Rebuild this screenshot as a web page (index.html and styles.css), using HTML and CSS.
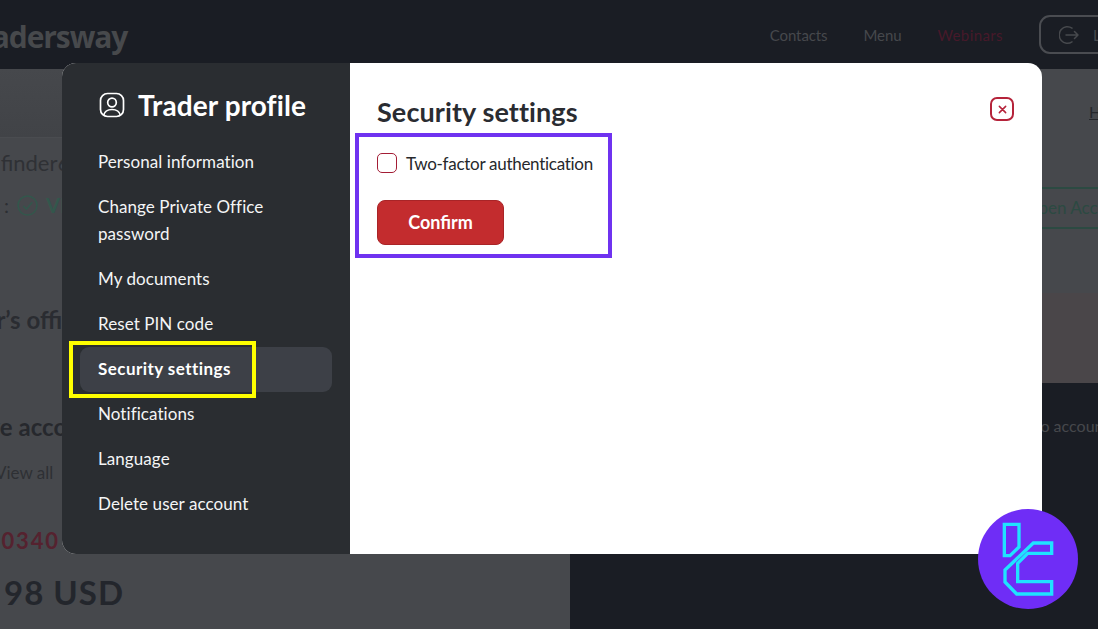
FILE: index.html
```html
<!DOCTYPE html>
<html lang="en">
<head>
<meta charset="utf-8">
<title>Trader profile</title>
<link rel="stylesheet" href="styles.css">
</head>
<body>
<div class="page">
  <header class="topbar">
    <div class="brand">Tradersway</div>
    <nav class="topnav">
      <a class="topnav-link">Contacts</a>
      <a class="topnav-link">Menu</a>
      <a class="topnav-link topnav-red">Webinars</a>
    </nav>
    <div class="logout">
      <svg class="logout-icon" viewBox="0 0 20 20" fill="none" stroke="currentColor" stroke-width="1.5" stroke-linecap="round" stroke-linejoin="round"><path d="M13 3.2A8.2 8.2 0 1 0 13 16.800M7 10H19M15.500 6.500 19 10l-3.500 3.500"/></svg>
      <span>Logout</span>
    </div>
  </header>
  <main class="backdrop">
    <section class="bg-left">
      <div class="bg-banner"></div>
      <div class="bg-name">Pathfinder6</div>
      <div class="bg-status">
        <span>:</span>
        <svg class="bg-check" viewBox="0 0 20 20" fill="none" stroke="currentColor" stroke-width="1.500"><circle cx="10" cy="10" r="9"/><path d="M6 10.500 9 13.500 14.500 7"/></svg>
        <span class="bg-verified">VERIFIED</span>
      </div>
      <h2 class="bg-office">Trader’s office</h2>
      <h2 class="bg-live">Live accounts</h2>
      <div class="bg-view">View all</div>
      <div class="bg-number">10340</div>
      <div class="bg-amount">98 USD</div>
    </section>
    <section class="bg-right">
      <div class="bg-right-top">
        <div class="bg-link">Help</div>
        <div class="bg-open">Open Account</div>
        <div class="bg-tint"></div>
      </div>
      <div class="bg-right-bottom">
        <div class="bg-demo">Go to accounts</div>
      </div>
    </section>
  </main>

  <div class="modal">
    <aside class="sidebar">
      <div class="side-head">
        <svg class="side-icon" viewBox="0 0 26 26" fill="none" stroke="currentColor" stroke-width="1.700"><rect x="1.500" y="1.500" width="23" height="23" rx="7"/><circle cx="13" cy="10.500" r="4.300"/><path d="M4.500 23.500C5.500 19.500 9 17.500 13 17.500S20.500 19.500 21.500 23.500"/></svg>
        <span class="side-title">Trader profile</span>
      </div>
      <ul class="side-list">
        <li class="side-item">Personal information</li>
        <li class="side-item">Change Private Office password</li>
        <li class="side-item">My documents</li>
        <li class="side-item">Reset PIN code</li>
        <li class="side-item side-item-active">Security settings</li>
        <li class="side-item">Notifications</li>
        <li class="side-item">Language</li>
        <li class="side-item">Delete user account</li>
      </ul>
    </aside>
    <section class="content">
      <div class="content-head">
        <h1 class="content-title">Security settings</h1>
        <button class="close" type="button" aria-label="Close">
          <svg viewBox="0 0 10 10" fill="none" stroke="currentColor" stroke-width="1.700" stroke-linecap="round"><path d="M1.500 1.500 8.500 8.500M8.500 1.500 1.500 8.500"/></svg>
        </button>
      </div>
      <label class="check-row">
        <span class="check-box"></span>
        <span class="check-label">Two-factor authentication</span>
      </label>
      <button class="confirm" type="button">Confirm</button>
    </section>
  </div>

  <div class="mark mark-yellow"></div>
  <div class="mark mark-purple"></div>

  <svg class="badge" viewBox="54 327 300 300" fill="none">
    <circle cx="204" cy="477" r="150" fill="#6f2df6"/>
    <g stroke="#1fe3ff" stroke-width="10">
      <path d="M133 373H177V441L150 467H133Z"/>
      <path d="M220 429H275V460H203L173 490V545H275V582H170L135 546V510Z"/>
    </g>
  </svg>
</div>
</body>
</html>
```
FILE: styles.css
```css
* { box-sizing: border-box; }
html, body { margin: 0; padding: 0; }
body { font-family: "Lato", "Liberation Sans", sans-serif; background: #1a1d24; }
.page { position: relative; width: 1098px; height: 629px; overflow: hidden; }

.topbar { height: 69px; background: #1a1d24; display: flex; align-items: center; }
.brand { margin: 4px 0 0 -37px; font-family: "Open Sans", sans-serif; font-size: 30px; font-weight: 700; letter-spacing: -1.1px; color: #47494c; }
.topnav { margin-left: auto; display: flex; gap: 36px; font-size: 15px; letter-spacing: -0.1px; color: #46484c; }
.topnav-red { color: #47192a; letter-spacing: 0.4px; }
.logout { flex: none; margin: 0 -70px 0 36px; width: 129px; height: 39px; border: 2px solid #4a4c51; border-radius: 11px; display: flex; align-items: center; gap: 14px; padding-left: 18px; font-size: 15px; color: #47494d; }
.logout-icon { width: 20px; height: 20px; flex: none; }

.backdrop { display: flex; height: 560px; }
.bg-left { width: 570px; flex: none; background: #46484c; color: #2a2c31; overflow: hidden; }
.bg-banner { height: 69px; background: linear-gradient(#46484c, #414347); border-bottom: 1px solid #4a4c50; }
.bg-name { margin: 10px 0 0 -43px; font-size: 22px; line-height: 30px; color: #2f3135; }
.bg-status { margin: 15px 0 0 4px; height: 24px; display: flex; align-items: center; gap: 8px; font-size: 20px; color: #2c2e33; }
.bg-check { width: 21px; height: 21px; color: #33574c; flex: none; }
.bg-verified { color: #33574c; font-weight: 700; }
.bg-office { margin: 88px 0 0 -63px; font-size: 24px; line-height: 30px; font-weight: 700; color: #2a2c31; white-space: nowrap; }
.bg-live { margin: 77px 0 0 -31px; font-size: 24px; line-height: 30px; font-weight: 700; color: #26282d; white-space: nowrap; }
.bg-view { margin: 19px 0 0 -5px; font-size: 17px; line-height: 24px; color: #2e3034; }
.bg-number { margin: 42px 0 0 -13px; font-size: 22px; line-height: 28px; font-weight: 700; color: #55222f; letter-spacing: 1.8px; }
.bg-amount { margin: 16px 0 0 4px; font-size: 33px; line-height: 42px; font-weight: 700; color: #23262c; letter-spacing: 1px; }

.bg-right { flex: 1; display: flex; flex-direction: column; }
.bg-right-top { height: 314px; background: #46484c; position: relative; overflow: hidden; }
.bg-link { margin: 32px 0 0 519px; font-size: 16px; line-height: 22px; color: #25272b; text-decoration: underline; }
.bg-open { margin: 64px 0 0 430px; width: 200px; height: 42px; border: solid #2c4a42; border-width: 2px 0; line-height: 38px; font-size: 17px; color: #2c4a42; white-space: nowrap; padding-left: 25px; }
.bg-tint { position: absolute; left: 0; right: 0; top: 224px; height: 90px; background: #4a4649; }
.bg-right-bottom { flex: 1; background: #1a1d24; overflow: hidden; }
.bg-demo { margin: 31px 0 0 440px; font-size: 16px; line-height: 24px; color: #46484c; white-space: nowrap; }

.modal { position: absolute; left: 62px; top: 63px; width: 980px; height: 491px; display: flex; border-radius: 14px; overflow: hidden; background: #fff; }
.sidebar { width: 288px; flex: none; background: #2a2d31; padding: 0 18px; color: #fff; }
.side-head { height: 77px; padding: 6px 0 0 19px; display: flex; align-items: center; gap: 13px; }
.side-icon { width: 26px; height: 26px; flex: none; }
.side-title { font-size: 28px; font-weight: 700; letter-spacing: 0.1px; }
.side-list { list-style: none; margin: 0; padding: 0; }
.side-item { padding: 8px 18px 10px; font-size: 17px; line-height: 27px; letter-spacing: 0.07px; color: #f4f5f6; }
.side-item-active { background: #3d4047; border-radius: 9px; font-weight: 700; letter-spacing: 0.45px; color: #fff; }

.content { flex: 1; padding: 0 28px 0 27px; color: #26282c; }
.content-head { height: 90px; padding-top: 34px; display: flex; align-items: flex-start; justify-content: space-between; }
.content-title { margin: 0; font-size: 27px; line-height: 30px; font-weight: 700; letter-spacing: 0.1px; color: #2a2c31; }
.close { width: 24px; height: 24px; padding: 0; background: #fff; border: 2px solid #b5233a; border-radius: 7px; color: #b5233a; display: flex; align-items: center; justify-content: center; }
.close svg { width: 9px; height: 9px; }
.check-row { display: flex; align-items: center; gap: 9px; height: 20px; }
.check-box { width: 20px; height: 20px; flex: none; border: 1px solid #a31d35; border-radius: 5px; background: #fff; }
.check-label { font-size: 17px; letter-spacing: -0.28px; color: #26282c; }
.confirm { display: block; margin-top: 27px; width: 127px; height: 45px; padding: 0 0 2px; background: #c32c2e; border: 1px solid #a92427; border-radius: 8px; color: #fff; font-family: inherit; font-size: 18px; font-weight: 700; }

.mark { position: absolute; }
.mark-yellow { left: 69px; top: 341px; width: 187px; height: 57px; border: 4px solid #ffff00; }
.mark-purple { left: 355px; top: 133px; width: 257px; height: 125px; border: 4px solid #6f32f0; }
.badge { position: absolute; left: 978px; top: 509px; width: 100px; height: 100px; }
```
